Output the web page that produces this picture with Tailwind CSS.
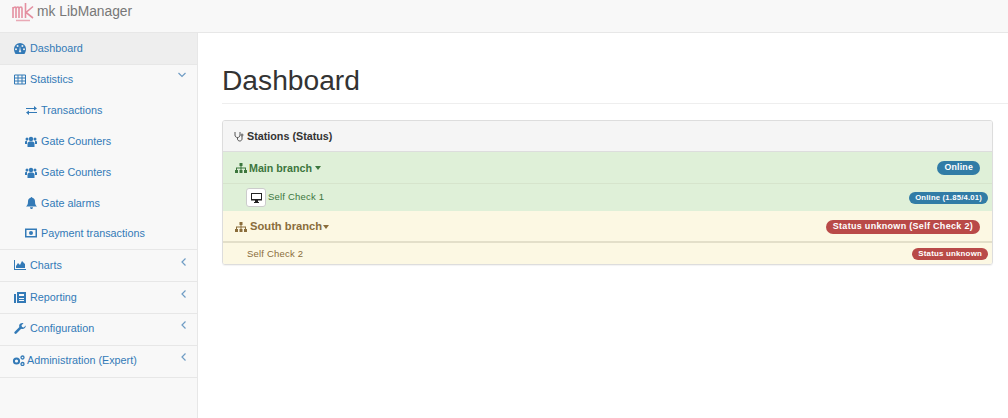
<!DOCTYPE html>
<html lang="en">
  <head>
    <meta charset="UTF-8" />
    <title>mk LibManager</title>
    <script src="https://cdn.jsdelivr.net/npm/@tailwindcss/browser@4"></script>
  </head>
  <body class="bg-white font-['Liberation_Sans',Arial,sans-serif] text-[12px] text-[#333] h-[418px] overflow-hidden">
    <!-- Navbar -->
    <header class="h-[33px] bg-[#f8f8f8] border-b border-[#e7e7e7] flex items-center pl-[12px] pb-[8px]">
      <svg class="w-[22px] h-[19px] mr-[3px]" viewBox="0 0 22 19" fill="none" stroke="#e48fa0" stroke-width="1.600">
        <path d="M1 15V4M1 5.500c1.500-2 3-2 3 0V15M4 5.500c1-2 3-2 3 0V15M7 5.500c1-2 3-2 3 0V15M13.500 0v15M21 3.500l-7 6 7 5.500" />
        <path d="M4 17.500h14" stroke-width="1.500" stroke="#e9a9b5" />
      </svg>
      <span class="text-[13.800px] text-[#777] leading-none">mk LibManager</span>
    </header>

    <div class="flex h-[385px]">
      <!-- Sidebar -->
      <nav class="w-[198px] shrink-0 bg-[#f8f8f8] border-r border-[#e7e7e7] text-[#337ab7] text-[10.800px]">
        <a class="h-[32px] flex items-center pb-[1px] pl-[14px] bg-[#eee] border-b border-[#e7e7e7]">
          <svg class="w-[12px] h-[11px] mr-[4px]" viewBox="0 0 12 11" fill="#337ab7"><path fill-rule="evenodd" d="M6 0a6 6 0 0 0-6 6c0 1.900.7 3.600 1.600 5h8.800c.9-1.400 1.600-3.100 1.600-5a6 6 0 0 0-6-6zM2 5.200a1 1 0 1 1 0 2 1 1 0 0 1 0-2zM3.600 2a1 1 0 1 1 0 2 1 1 0 0 1 0-2zM8.400 2a1 1 0 1 1 0 2 1 1 0 0 1 0-2zM10 5.200a1 1 0 1 1 0 2 1 1 0 0 1 0-2zM5.400 7.500l.6-4.500.7 4.500a1.100 1.100 0 1 1-1.300 0z"/></svg>
          Dashboard
        </a>
        <div class="border-b border-[#e7e7e7]">
          <a class="h-[30px] flex items-center pb-[1px] pl-[14px] relative">
            <svg class="w-[12px] h-[11px] mr-[4px]" viewBox="0 0 12 11" fill="none" stroke="#337ab7"><path d="M.5 1h11v9H.5zM.5 4h11M.5 7h11M4 1v9M8 1v9"/></svg>
            Statistics
            <svg class="absolute right-[11px] top-[7px] w-[8px] h-[6px]" viewBox="0 0 8 6" fill="none" stroke="#6f9cc4" stroke-width="1.200"><path d="M.5 1l3.500 3.500L7.500 1"/></svg>
          </a>
          <a class="h-[31px] flex items-center pb-[1px] pl-[26px]">
            <svg class="w-[11px] h-[9px] mr-[4px]" viewBox="0 0 11 9" fill="#337ab7"><path d="M0 2h8V0l3 2.500L8 4.500V3H0zM11 6H3V4.500L0 6.500 3 9V7h8z"/></svg>
            Transactions
          </a>
          <a class="h-[31px] flex items-center pb-[1px] pl-[25px]">
            <svg class="w-[12px] h-[11px] mr-[4px]" viewBox="0 0 12 11" fill="#337ab7"><circle cx="6" cy="3" r="2.200"/><circle cx="2" cy="3" r="1.500"/><circle cx="10" cy="3" r="1.500"/><path d="M2.500 11V7.500C2.500 6 4 5.500 6 5.500s3.500.5 3.500 2V11zM0 8V6c0-.8.800-1.200 2-1.200v3.200zM12 8V6c0-.8-.800-1.200-2-1.200v3.200z"/></svg>
            Gate Counters
          </a>
          <a class="h-[31px] flex items-center pb-[1px] pl-[25px]">
            <svg class="w-[12px] h-[11px] mr-[4px]" viewBox="0 0 12 11" fill="#337ab7"><circle cx="6" cy="3" r="2.200"/><circle cx="2" cy="3" r="1.500"/><circle cx="10" cy="3" r="1.500"/><path d="M2.500 11V7.500C2.500 6 4 5.500 6 5.500s3.500.5 3.500 2V11zM0 8V6c0-.8.800-1.200 2-1.200v3.200zM12 8V6c0-.8-.800-1.200-2-1.200v3.200z"/></svg>
            Gate Counters
          </a>
          <a class="h-[30px] flex items-center pl-[26px]">
            <svg class="w-[11px] h-[12px] mr-[4px]" viewBox="0 0 11 12" fill="#337ab7"><path d="M5.500 0c.5 0 .8.300.8.800C8 1.200 9 2.500 9 4.500c0 3 .8 4 2 5H0c1.200-1 2-2 2-5 0-2 1-3.300 2.700-3.700 0-.5.300-.8.800-.8zM4 10.200h3C7 11.200 6.300 12 5.500 12S4 11.200 4 10.200z"/></svg>
            Gate alarms
          </a>
          <a class="h-[31px] flex items-center pb-[1px] pl-[25px]">
            <svg class="w-[12px] h-[10px] mr-[4px]" viewBox="0 0 12 10" fill="#337ab7"><path fill-rule="evenodd" d="M0 .5h12v9H0zM1.500 2v6h9V2zM6 3a2 2 0 1 1 0 4 2 2 0 0 1 0-4z"/></svg>
            Payment transactions
          </a>
        </div>
        <a class="h-[32px] flex items-center pb-[1px] pl-[14px] border-b border-[#e7e7e7] relative">
          <svg class="w-[12px] h-[10px] mr-[4px]" viewBox="0 0 12 10" fill="#337ab7"><path d="M0 0h1v9h11v1H0zM2 8V6l2-3 2 2 2-4 3 3v4z"/></svg>
          Charts
          <svg class="absolute right-[11px] top-[8px] w-[5px] h-[8px]" viewBox="0 0 5 8" fill="none" stroke="#6f9cc4" stroke-width="1.200"><path d="M4.500 .5L1 4l3.500 3.500"/></svg>
        </a>
        <a class="h-[32px] flex items-center pb-[1px] pl-[14px] border-b border-[#e7e7e7] relative">
          <svg class="w-[12px] h-[11px] mr-[4px]" viewBox="0 0 12 11" fill="#337ab7"><path fill-rule="evenodd" d="M3 0h9v11H3zM5 2v2h5V2zM5 6v1h5V6zM5 8v1h5V8zM0 2h2v9H0z"/></svg>
          Reporting
          <svg class="absolute right-[11px] top-[8px] w-[5px] h-[8px]" viewBox="0 0 5 8" fill="none" stroke="#6f9cc4" stroke-width="1.200"><path d="M4.500 .5L1 4l3.500 3.500"/></svg>
        </a>
        <a class="h-[32px] flex items-center pb-[3px] pl-[14px] border-b border-[#e7e7e7] relative">
          <svg class="w-[12px] h-[11px] mr-[4px]" viewBox="0 0 12 11" fill="#337ab7"><path d="M11.800 2.500c0 2-1.500 3.500-3.500 3.500-.4 0-.8-.1-1.100-.2L2.500 10.500a1.200 1.200 0 0 1-1.800-1.800L5.400 4.100C5.200 3.700 5.100 3.300 5.100 3 5.100 1 6.600 0 8.500 0c.3 0 .7 0 1 .2L7.500 2.200 8 4l1.800.5 1.900-2z"/></svg>
          Configuration
          <svg class="absolute right-[11px] top-[7px] w-[5px] h-[8px]" viewBox="0 0 5 8" fill="none" stroke="#6f9cc4" stroke-width="1.200"><path d="M4.500 .5L1 4l3.500 3.500"/></svg>
        </a>
        <a class="h-[32px] flex items-center pb-[3px] pl-[12px] border-b border-[#e7e7e7] relative">
          <svg class="w-[13px] h-[11px] mr-[2px]" viewBox="0 0 13 11" fill="none" stroke="#337ab7"><circle cx="4.500" cy="6" r="2.600" stroke-width="2"/><circle cx="10.500" cy="2.500" r="1.500" stroke-width="1.300"/><circle cx="10.500" cy="9" r="1.500" stroke-width="1.300"/></svg>
          Administration (Expert)
          <svg class="absolute right-[11px] top-[7px] w-[5px] h-[8px]" viewBox="0 0 5 8" fill="none" stroke="#6f9cc4" stroke-width="1.200"><path d="M4.500 .5L1 4l3.500 3.500"/></svg>
        </a>
      </nav>

      <!-- Main -->
      <main class="flex-1 pl-[24px] pr-0">
        <h1 class="text-[28.200px] leading-[31px] text-[#333] mt-[32px] pb-[7px] border-b border-[#eee] h-[39px]">Dashboard</h1>
        <section class="mt-[16px] w-[771px] border border-[#ddd] rounded-[3px] shadow-[0_1px_1px_rgba(0,0,0,0.05)] overflow-hidden">
          <div class="h-[31px] bg-[#f5f5f5] border-b border-[#ddd] flex items-center pl-[11px] font-bold text-[10.750px] text-[#333]">
            <svg class="w-[10px] h-[11px] mr-[3px]" viewBox="0 0 10 11" fill="none" stroke="#555"><path d="M1 1v3c0 1.500 1 2.500 2.500 2.500S6 5.500 6 4V1M3.500 6.500V8c0 1.200 1 2 2.300 2S8 9 8 8V5"/><circle cx="8" cy="4" r="1"/></svg>
            Stations (Status)
          </div>
          <div class="h-[32px] bg-[#dff0d8] border-b border-[#d6e4cc] flex items-center pt-[1px] pl-[12px] pr-[12px] font-bold text-[10.700px] text-[#3c763d]">
            <svg class="w-[12px] h-[10px] mr-[2px]" viewBox="0 0 12 10" fill="#3c763d"><path d="M4.500 0h3v3h-3zM0 7h3v3H0zM4.500 7h3v3h-3zM9 7h3v3H9zM5.500 3h1v1.500H11V7h-1V5.500H6.500V7h-1V5.500H2V7H1V4.500h4.500z"/></svg>
            Main branch
            <span class="ml-[3px] border-x-[3.500px] border-x-transparent border-t-[4px] border-t-[#3c763d]"></span>
            <span class="ml-auto h-[14px] px-[7px] rounded-full bg-[#317ca6] text-white text-[8.800px] font-bold flex items-center tracking-[0.2px]">Online</span>
          </div>
          <div class="h-[27px] bg-[#dff0d8] flex items-center pl-[24px] pr-[4px] text-[9.500px] text-[#3c763d] tracking-[0.2px]">
            <span class="w-[20px] h-[19px] bg-white border border-[#ccc] rounded-[3px] flex items-center justify-center mr-[2px] -ml-[1px]">
              <svg class="w-[11px] h-[10px]" viewBox="0 0 11 10" fill="#222"><path fill-rule="evenodd" d="M0 0h11v7.500H7V9h1v1H3V9h1V7.500H0zM1 1v5h9V1z"/></svg>
            </span>
            Self Check 1
            <span class="ml-auto h-[12px] px-[6px] rounded-full bg-[#317ca6] text-white text-[7.700px] font-bold flex items-center">Online (1.85/4.01)</span>
          </div>
          <div class="h-[32px] bg-[#fcf8e3] border-b-2 border-[#e3dfc9] flex items-center pt-[1px] pl-[12px] pr-[12px] font-bold text-[11.200px] text-[#8a6d3b]">
            <svg class="w-[12px] h-[10px] mr-[3px]" viewBox="0 0 12 10" fill="#8a6d3b"><path d="M4.500 0h3v3h-3zM0 7h3v3H0zM4.500 7h3v3h-3zM9 7h3v3H9zM5.500 3h1v1.500H11V7h-1V5.500H6.500V7h-1V5.500H2V7H1V4.500h4.500z"/></svg>
            South branch
            <span class="ml-[1px] border-x-[3.500px] border-x-transparent border-t-[4px] border-t-[#8a6d3b]"></span>
            <span class="ml-auto h-[14px] px-[7px] rounded-full bg-[#b94a48] text-white text-[9px] font-bold flex items-center tracking-[0.3px]">Status unknown (Self Check 2)</span>
          </div>
          <div class="h-[21px] bg-[#fcf8e3] flex items-center pt-[1px] pl-[24px] pr-[4px] text-[9.500px] text-[#8a6d3b] tracking-[0.2px]">
            Self Check 2
            <span class="ml-auto h-[12px] px-[6px] rounded-full bg-[#b94a48] text-white text-[7.900px] font-bold flex items-center">Status unknown</span>
          </div>
        </section>
      </main>
    </div>
  </body>
</html>
